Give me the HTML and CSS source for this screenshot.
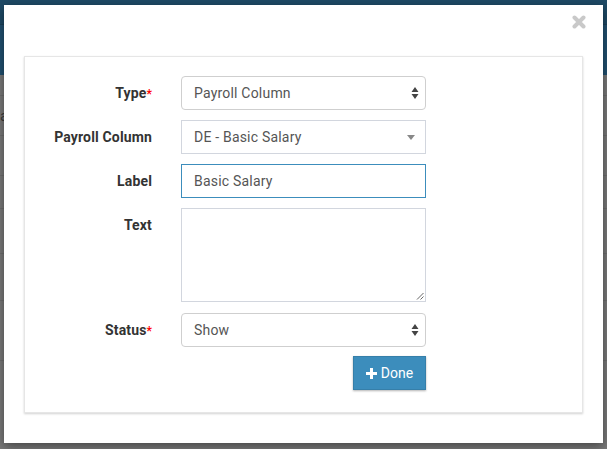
FILE: index.html
```html
<!DOCTYPE html>
<html>
<head>
<meta charset="utf-8">
<link rel="stylesheet" href="styles.css">
</head>
<body>
<div class="page">
  <div class="topbar"></div>
  <div class="subbar"></div>
  <div class="content">
    <div class="row r1"></div>
    <div class="row r2"><span class="ghost">a</span></div>
    <div class="row r3"></div>
    <div class="row r4"></div>
    <div class="row r5"></div>
    <div class="row r6"></div>
    <div class="row r7"></div>
  </div>
</div>

<div class="modal">
  <div class="modal-head">
    <svg class="close" width="14" height="14" viewBox="0 0 14 14">
      <path d="M2.5 2.5 L11.5 11.5 M11.5 2.5 L2.5 11.5" stroke="#c9c9c9" stroke-width="4" stroke-linecap="round"/>
    </svg>
  </div>
  <div class="card">
    <div class="form-row">
      <div class="lbl">Type<span class="req">*</span></div>
      <div class="ctl select rounded">
        <span>Payroll Column</span>
        <svg class="updown" width="8" height="14" viewBox="0 0 8 14">
          <path d="M4 1 L7.5 6 L0.5 6 Z M4 13 L7.5 8 L0.5 8 Z" fill="#444"/>
        </svg>
      </div>
    </div>
    <div class="form-row">
      <div class="lbl">Payroll Column</div>
      <div class="ctl select s2">
        <span>DE - Basic Salary</span>
        <svg class="down" width="8" height="5" viewBox="0 0 8 5">
          <path d="M0 0 L8 0 L4 5 Z" fill="#888"/>
        </svg>
      </div>
    </div>
    <div class="form-row">
      <div class="lbl">Label</div>
      <div class="ctl input focus"><span>Basic Salary</span></div>
    </div>
    <div class="form-row">
      <div class="lbl">Text</div>
      <div class="ctl textarea">
        <svg class="grip" width="8" height="8" viewBox="0 0 8 8">
          <path d="M7.5 1 L1 7.5 M7.5 4.5 L4.5 7.5" stroke="#555" stroke-width="0.9"/>
        </svg>
      </div>
    </div>
    <div class="form-row">
      <div class="lbl">Status<span class="req">*</span></div>
      <div class="ctl select rounded">
        <span>Show</span>
        <svg class="updown" width="8" height="14" viewBox="0 0 8 14">
          <path d="M4 1 L7.5 6 L0.5 6 Z M4 13 L7.5 8 L0.5 8 Z" fill="#444"/>
        </svg>
      </div>
    </div>
    <div class="actions">
      <button class="btn">
        <svg width="11" height="11" viewBox="0 0 11 11">
          <path d="M4 0 H7 V4 H11 V7 H7 V11 H4 V7 H0 V4 H4 Z" fill="#fff"/>
        </svg>
        <span>Done</span>
      </button>
    </div>
  </div>
</div>
</body>
</html>
```

FILE: styles.css
```css
* { box-sizing: border-box; }
html, body { margin: 0; padding: 0; }
body {
  width: 607px;
  height: 449px;
  overflow: hidden;
  background: #7a7a7a;
  font-family: Roboto, "Liberation Sans", Arial, sans-serif;
  font-size: 14px;
  color: #333;
}
.page { width: 607px; height: 449px; }
.topbar { height: 25px; background: #1e4a66; border-bottom: 1px solid #1a4159; }
.subbar { height: 50px; background: #215171; }
.content { background: #7a7a7a; }
.row { border-bottom: 1px solid #6f6f6f; }
.r1 { height: 21px; }
.r2 { height: 40px; position: relative; }
.r3 { height: 40px; }
.r4 { height: 33px; }
.r5 { height: 45px; }
.r6 { height: 47px; }
.r7 { height: 60px; }
.ghost { color: #3a3a3a; font-size: 15px; line-height: 40px; }

.modal {
  position: absolute;
  left: 4px;
  top: 5px;
  width: 599px;
  height: 438px;
  background: #fff;
  box-shadow: 0 3px 10px rgba(0, 0, 0, 0.45);
  padding: 0 20px;
}
.modal-head {
  height: 51px;
  display: flex;
  justify-content: flex-end;
  padding-top: 10px;
}
.close { margin-right: -3px; }

.card {
  width: 559px;
  height: 357px;
  border: 1px solid #e6e6e6;
  box-shadow: 0 1px 2px rgba(0, 0, 0, 0.18);
  padding: 19px 0 0 0;
}
.form-row {
  display: grid;
  grid-template-columns: 127px 245px;
  column-gap: 29px;
  margin-bottom: 10px;
  align-items: start;
}
.lbl {
  text-align: right;
  font-weight: bold;
  line-height: 20px;
  padding-top: 7px;
  color: #333;
  letter-spacing: 0.15px;
}
.req { color: #ff0000; font-size: 12px; letter-spacing: 0; }
.ctl {
  height: 34px;
  border: 1px solid #d2d6de;
  display: flex;
  align-items: center;
  padding: 0 12px;
  color: #555;
  position: relative;
  letter-spacing: 0.2px;
}
.select { justify-content: space-between; }
.rounded { border-radius: 4px; border-color: #cfcfcf; padding-right: 6px; }
.s2 { padding-right: 10px; }
.focus { border-color: #3c8dbc; }
.textarea { height: 94px; margin-bottom: 1px; }
.grip { position: absolute; right: 1px; bottom: 1px; }
.actions {
  display: flex;
  justify-content: flex-end;
  width: 401px;
  margin-top: -1px;
}
.btn {
  width: 73px;
  height: 34px;
  background: #3c8dbc;
  border: 1px solid #367fa9;
  color: #fff;
  font-family: Roboto, "Liberation Sans", Arial, sans-serif;
  font-size: 14px;
  display: flex;
  align-items: center;
  justify-content: center;
  gap: 4px;
  padding: 0;
  box-shadow: 0 1px 2px rgba(0, 0, 0, 0.3);
}
```
